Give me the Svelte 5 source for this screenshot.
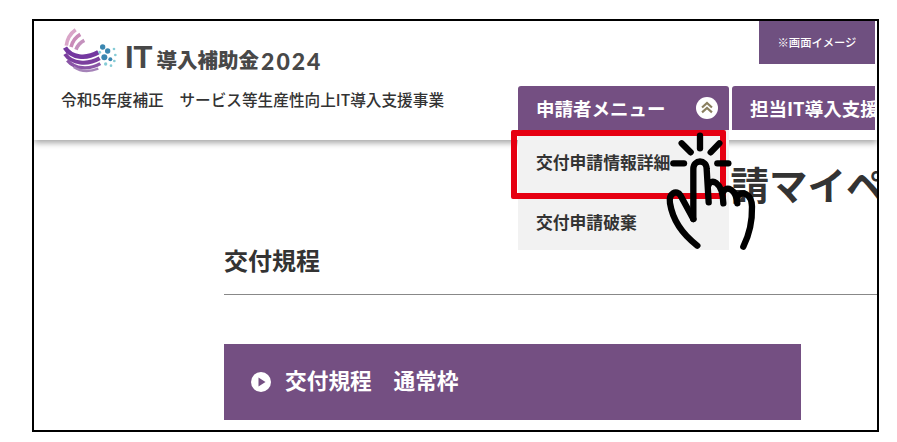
<script>
  const rays = [
    [120, 32, 120, 70],
    [65, 55, 92, 82],
    [178, 55, 152, 82],
    [40, 115, 72, 115],
    [172, 115, 205, 115]
  ];
  const dots = [
    [143, 66, 8], [158, 78, 8], [148, 97, 9], [166, 103, 6], [177, 72, 4], [181, 90, 4],
    [178, 108, 4], [152, 117, 5], [168, 122, 4], [134, 82, 4.5]
  ];
</script>

<div class="frame">
  <header class="header">
    <div class="brand">
      <div class="logo-row">
        <svg class="logo" viewBox="0 0 210 165" aria-hidden="true">
          <g fill="none" stroke-linecap="butt">
            <path d="M34 62 C36 42 48 24 62 14" stroke="#d9a5c8" stroke-width="11" />
            <path d="M48 66 C52 50 62 36 76 28" stroke="#c98bb8" stroke-width="11" />
            <path d="M63 74 C67 62 76 52 88 46" stroke="#c491bd" stroke-width="11" />
            <path d="M30 68 C48 98 92 104 130 82" stroke="#7438a0" stroke-width="14" />
            <path d="M30 87 C50 117 98 121 134 100" stroke="#7b3f9e" stroke-width="12" />
            <path d="M37 106 C60 133 102 135 136 116" stroke="#8a55a6" stroke-width="10" />
            <path d="M56 126 C78 141 106 140 130 131" stroke="#a583b8" stroke-width="7" />
          </g>
          {#each dots as [cx, cy, r]}
            <circle {cx} {cy} {r} fill={r > 5 ? '#3a86b0' : '#86ccd6'} />
          {/each}
        </svg>
        <span class="logo-it">IT</span><span class="logo-jp">導入補助金</span><span class="logo-year">2024</span>
      </div>
      <p class="subtitle">令和5年度補正　サービス等生産性向上IT導入支援事業</p>
    </div>
    <div class="side">
      <div class="tag">※画面イメージ</div>
      <nav class="nav">
        <div class="nav-btn first">
          申請者メニュー
          <svg class="chev" viewBox="0 0 20 20" aria-hidden="true">
            <circle cx="10" cy="10" r="10" fill="#fff" />
            <path d="M5.5 9.5 10 5.5l4.5 4M5.5 14 10 10l4.5 4" fill="none" stroke="#8a7f5f" stroke-width="2" />
          </svg>
        </div>
        <div class="nav-btn second">担当IT導入支援事業者メニュー</div>
      </nav>
    </div>
  </header>

  <h1 class="page-title">交付申請マイページ</h1>

  <h2 class="section-title">交付規程</h2>

  <div class="bar">
    <svg class="play" viewBox="0 0 20 20" aria-hidden="true">
      <circle cx="10" cy="10" r="10" fill="#fff" />
      <path d="M7.5 5.5 14.5 10l-7 4.5z" fill="#744f82" />
    </svg>
    <span>交付規程　通常枠</span>
  </div>

  <div class="dropdown">
    <div class="drop-item">交付申請情報詳細</div>
    <div class="drop-item">交付申請破棄</div>
  </div>
  <div class="highlight"></div>

  <svg class="hand" viewBox="0 0 330 390" aria-hidden="true">
    <g fill="none" stroke="#000" stroke-width="19" stroke-linecap="round" stroke-linejoin="round">
      {#each rays as [x1, y1, x2, y2]}
        <line {x1} {y1} {x2} {y2} />
      {/each}
      <path d="M100 282 V132 C100 102 140 102 140 132 L146 232" />
      <path d="M145 182 C150 160 188 165 190 235" />
      <path d="M190 200 C198 182 228 190 232 235" />
      <path d="M232 215 C245 195 275 205 276 245 C277 290 265 335 250 365" />
      <path d="M100 282 L62 212 C50 192 25 205 30 235 C38 285 70 330 112 362" />
    </g>
  </svg>
</div>

<style>
  :global(body) {
    margin: 0;
    background: #fff;
  }

  .frame {
    position: relative;
    box-sizing: border-box;
    width: 847px;
    height: 413px;
    margin: 19px 0 0 32px;
    border: 2px solid #000;
    overflow: hidden;
    font-family: "Noto Sans CJK JP", "Noto Sans", sans-serif;
    color: #333;
  }

  .header {
    display: flex;
    justify-content: space-between;
    height: 119px;
    box-shadow: 0 3px 6px rgba(0, 0, 0, 0.35);
  }

  .brand {
    padding: 9px 0 0 27px;
  }

  .logo-row {
    display: flex;
    align-items: center;
    height: 50px;
    color: #484848;
    font-weight: 700;
    white-space: nowrap;
  }

  .logo {
    width: 70px;
    height: 55px;
    margin: -5px 0 0 -6px;
    flex: none;
  }

  .logo-it {
    font-family: "Liberation Sans", sans-serif;
    font-size: 31px;
    line-height: 1;
    margin-top: 5px;
  }

  .logo-jp {
    font-size: 20.5px;
    font-weight: 900;
    margin: 8px 0 0 4px;
  }

  .logo-year {
    font-family: "Lato", sans-serif;
    font-weight: 900;
    font-size: 23px;
    letter-spacing: 2px;
    margin: 12px 0 0 2px;
  }

  .subtitle {
    margin: 9px 0 0;
    font-size: 15.65px;
    line-height: 22px;
    font-weight: 500;
    color: #333;
    white-space: nowrap;
  }

  .side {
    display: flex;
    flex-direction: column;
    align-items: flex-end;
    width: 359px;
    padding-right: 2px;
    box-sizing: border-box;
  }

  .tag {
    width: 116px;
    height: 44px;
    margin-top: -1px;
    background: #6f5080;
    color: #fff;
    font-size: 11.3px;
    font-weight: 500;
    display: flex;
    align-items: center;
    justify-content: center;
  }

  .nav {
    display: flex;
    gap: 3px;
    width: 357px;
    margin-top: 22px;
    overflow: hidden;
  }

  .nav-btn {
    flex: none;
    box-sizing: border-box;
    height: 44px;
    background: #744f82;
    border-radius: 3px 3px 0 0;
    color: #fff;
    font-size: 18.5px;
    font-weight: 700;
    display: flex;
    align-items: center;
    white-space: nowrap;
  }

  .first {
    width: 211px;
    padding-left: 18px;
    justify-content: space-between;
    padding-right: 11px;
  }

  .second {
    width: 300px;
    padding-left: 18px;
  }

  .chev {
    width: 22px;
    height: 22px;
  }

  .page-title {
    margin: 18px 0 0;
    padding-left: 581px;
    font-size: 38.5px;
    line-height: 50px;
    font-weight: 700;
    white-space: nowrap;
    color: #333;
  }

  .section-title {
    margin: 35px 0 0 190px;
    padding-bottom: 17px;
    border-bottom: 1px solid #888;
    font-size: 24px;
    line-height: 34px;
    font-weight: 700;
    color: #333;
  }

  .bar {
    display: flex;
    align-items: center;
    gap: 14px;
    box-sizing: border-box;
    width: 577px;
    height: 76px;
    margin: 49px 0 0 190px;
    padding: 0 0 6px 27px;
    background: #744f82;
    color: #fff;
    font-size: 21.7px;
    font-weight: 700;
  }

  .play {
    width: 20px;
    height: 20px;
    margin-top: 6px;
    flex: none;
  }

  .dropdown {
    position: absolute;
    left: 484px;
    top: 109px;
    width: 211px;
    height: 120px;
    background: #f2f2f2;
  }

  .drop-item {
    height: 60px;
    padding: 3px 0 0 18px;
    box-sizing: border-box;
    display: flex;
    align-items: center;
    font-size: 16.8px;
    font-weight: 700;
    color: #333;
    white-space: nowrap;
  }

  .highlight {
    position: absolute;
    left: 477px;
    top: 109px;
    box-sizing: border-box;
    width: 215px;
    height: 69px;
    border: 6px solid #e60012;
    border-radius: 2px;
  }

  .hand {
    position: absolute;
    left: 626px;
    top: 104px;
    width: 110px;
    height: 130px;
  }
</style>
